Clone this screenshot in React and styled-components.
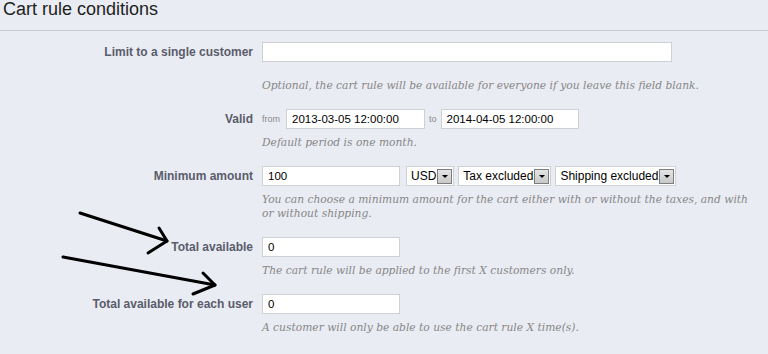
import React from 'react';
import styled, { createGlobalStyle } from 'styled-components';

const GlobalStyle = createGlobalStyle`
  html, body {
    margin: 0;
    padding: 0;
    background: #eaecf3;
  }
  body {
    font-family: "Liberation Sans", Arial, sans-serif;
  }
`

const Page = styled.div`
  position: relative;
  width: 768px;
  height: 354px;
  overflow: hidden;
  background: #eaecf3;
`

const Header = styled.div`
  padding: 1px 0 12px 3px;
  border-bottom: 1px solid #c8cad2;
  margin-bottom: 11px;
`

const Title = styled.h2`
  margin: 0;
  font-size: 18px;
  font-weight: normal;
  line-height: 17px;
  color: #1e1e1e;
`

const Row = styled.div`
  display: grid;
  grid-template-columns: 253px 1fr;
  column-gap: 9px;
  padding-bottom: 16px;
`

const Label = styled.label`
  text-align: right;
  font-size: 12px;
  font-weight: bold;
  line-height: 20px;
  color: #5a5c6b;
`

const Field = styled.div`
  display: flex;
  flex-direction: column;
  padding-right: 6px;
`

const Controls = styled.div`
  display: flex;
  align-items: center;
  gap: 4px;
`

const Input = styled.input`
  box-sizing: border-box;
  width: ${p => p.$width || 138}px;
  height: 20px;
  margin: 0 ${p => p.$after || 0}px 0 0;
  padding: 0 0 0 5px;
  border: 1px solid #cfd0d4;
  background: #fff;
  font-family: "Liberation Sans", Arial, sans-serif;
  font-size: 11.5px;
  color: #000;
  outline: none;
`

const Small = styled.span`
  font-size: 9px;
  color: #8a8a8a;
  margin-right: ${p => p.$after || 0}px;
`

const SelectBox = styled.div`
  display: flex;
  align-items: center;
  box-sizing: border-box;
  height: 20px;
  padding: 0 1px 0 4px;
  border: 1px solid #cfd0d4;
  background: #fff;
  font-size: 12px;
  color: #000;
`

const SelectButton = styled.span`
  box-sizing: border-box;
  display: flex;
  align-items: center;
  justify-content: center;
  width: 15px;
  height: 15px;
  margin-left: 1px;
  border: 1px solid #7d7d7d;
  background: linear-gradient(#e4e4e4, #c9c9c9);

  &::after {
    content: "";
    border-left: 3px solid transparent;
    border-right: 3px solid transparent;
    border-top: 3px solid #000;
    margin-top: 1px;
  }
`

const Help = styled.p`
  margin: ${p => p.$top || 7}px 0 0;
  font-family: "DejaVu Serif", "Liberation Serif", serif;
  font-style: italic;
  font-size: 10.7px;
  line-height: 14px;
  color: #878787;
`

const Arrows = styled.svg`
  position: absolute;
  top: 0;
  left: 0;
  pointer-events: none;
`

const Select = ({ children }) => (
  <SelectBox>
    <span>{children}</span>
    <SelectButton />
  </SelectBox>
)

const App = () => (
  <Page>
    <GlobalStyle />
    <Header>
      <Title>Cart rule conditions</Title>
    </Header>

    <Row>
      <Label>Limit to a single customer</Label>
      <Field>
        <Controls>
          <Input $width={410} />
        </Controls>
        <Help $top={17}>Optional, the cart rule will be available for everyone if you leave this field blank.</Help>
      </Field>
    </Row>

    <Row>
      <Label>Valid</Label>
      <Field>
        <Controls>
          <Small $after={2}>from</Small>
          <Input $width={139} defaultValue="2013-03-05 12:00:00" />
          <Small>to</Small>
          <Input $width={138} defaultValue="2014-04-05 12:00:00" />
        </Controls>
        <Help>Default period is one month.</Help>
      </Field>
    </Row>

    <Row>
      <Label>Minimum amount</Label>
      <Field>
        <Controls>
          <Input $width={138} $after={2} defaultValue="100" />
          <Select>USD</Select>
          <Select>Tax excluded</Select>
          <Select>Shipping excluded</Select>
        </Controls>
        <Help>You can choose a minimum amount for the cart either with or without the taxes, and with or without shipping.</Help>
      </Field>
    </Row>

    <Row>
      <Label>Total available</Label>
      <Field>
        <Controls>
          <Input $width={138} defaultValue="0" />
        </Controls>
        <Help>The cart rule will be applied to the first X customers only.</Help>
      </Field>
    </Row>

    <Row>
      <Label>Total available for each user</Label>
      <Field>
        <Controls>
          <Input $width={138} defaultValue="0" />
        </Controls>
        <Help>A customer will only be able to use the cart rule X time(s).</Help>
      </Field>
    </Row>

    <Arrows width="768" height="354" viewBox="0 0 768 354">
      <g fill="none" stroke="#000" strokeWidth="3" strokeLinecap="round" strokeLinejoin="round">
        <path d="M80 213 L167 241" />
        <path d="M159 228 L167 241 L148 253" />
        <path d="M63 257 L215 285" />
        <path d="M203 273 L215 285 L193 294" />
      </g>
    </Arrows>
  </Page>
)

export default App
